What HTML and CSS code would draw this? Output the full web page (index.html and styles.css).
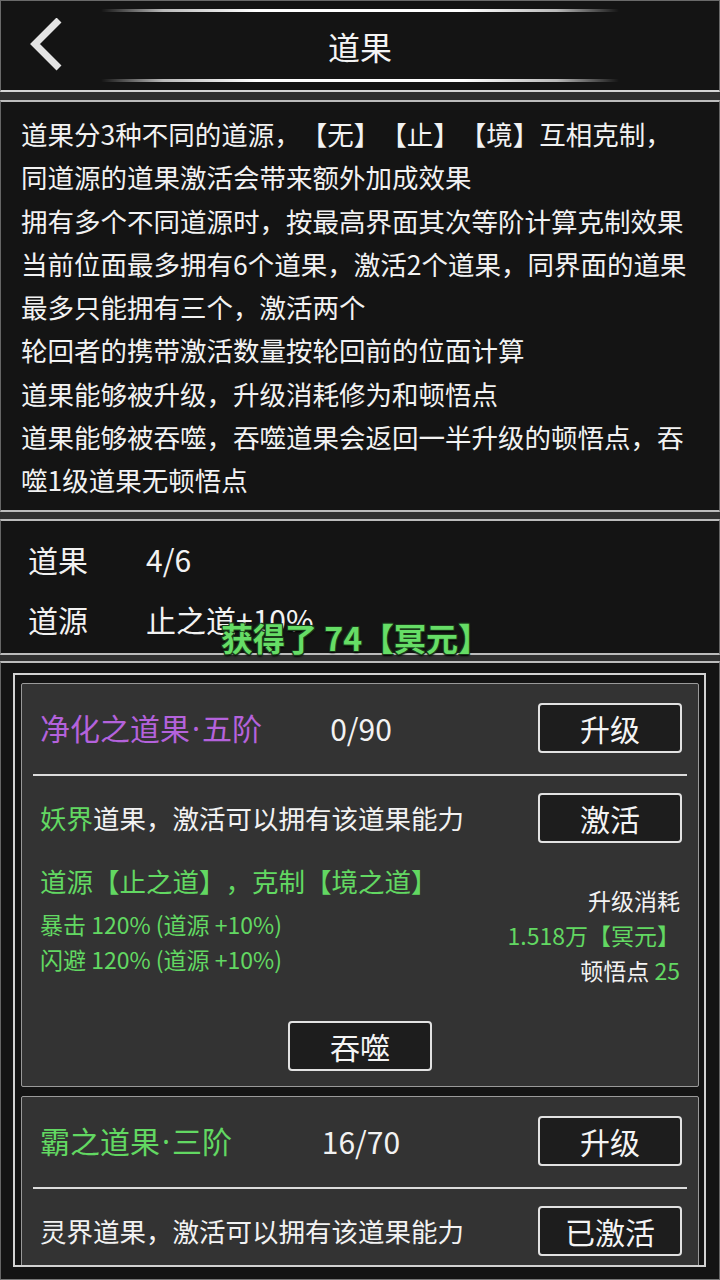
FILE: index.html
```html
<!DOCTYPE html>
<html lang="zh">
<head>
<meta charset="utf-8">
<title>道果</title>
<link rel="stylesheet" href="styles.css">
</head>
<body>
<div class="topbar">
  <div class="deco"></div>
  <div class="bar">
    <div class="back">
      <svg width="40" height="56" viewBox="0 0 40 56"><polyline points="32,2 8,26 32,50" fill="none" stroke="#e4e4e4" stroke-width="7"/></svg>
    </div>
    <div class="title">道果</div>
    <div></div>
  </div>
  <div class="deco"></div>
</div>

<div class="panel desc">
  <div>道果分3种不同的道源，【无】【止】【境】互相克制，</div>
  <div>同道源的道果激活会带来额外加成效果</div>
  <div>拥有多个不同道源时，按最高界面其次等阶计算克制效果</div>
  <div>当前位面最多拥有6个道果，激活2个道果，同界面的道果</div>
  <div>最多只能拥有三个，激活两个</div>
  <div>轮回者的携带激活数量按轮回前的位面计算</div>
  <div>道果能够被升级，升级消耗修为和顿悟点</div>
  <div>道果能够被吞噬，吞噬道果会返回一半升级的顿悟点，吞</div>
  <div>噬1级道果无顿悟点</div>
</div>

<div class="panel stats">
  <div class="srow"><span class="lab">道果</span><span>4/6</span></div>
  <div class="srow"><span class="lab">道源</span><span>止之道+10%</span></div>
</div>

<div class="panel list">
  <div class="frame">
    <div class="card">
      <div class="head">
        <div class="name purple">净化之道果<span class="dot">·</span>五阶</div>
        <div class="count">0/90</div>
        <div class="btn">升级</div>
      </div>
      <div class="sep"></div>
      <div class="act">
        <div class="realm"><span class="green">妖界</span>道果，激活可以拥有该道果能力</div>
        <div class="btn">激活</div>
      </div>
      <div class="info">
        <div class="left">
          <div class="dy green">道源【止之道】，克制【境之道】</div>
          <div class="st green">暴击 120% (道源 +10%)</div>
          <div class="st green">闪避 120% (道源 +10%)</div>
        </div>
        <div class="right">
          <div>升级消耗</div>
          <div class="green">1.518万【冥元】</div>
          <div>顿悟点 <span class="green">25</span></div>
        </div>
      </div>
      <div class="devour"><div class="btn">吞噬</div></div>
    </div>

    <div class="card card2">
      <div class="head">
        <div class="name green">霸之道果<span class="dot">·</span>三阶</div>
        <div class="count">16/70</div>
        <div class="btn">升级</div>
      </div>
      <div class="sep"></div>
      <div class="act">
        <div class="realm">灵界道果，激活可以拥有该道果能力</div>
        <div class="btn">已激活</div>
      </div>
    </div>
  </div>
</div>

<div class="toast">获得了 74【冥元】</div>
</body>
</html>
```

FILE: styles.css
```css
* { box-sizing: border-box; }
html, body {
  margin: 0;
  padding: 0;
}
body {
  width: 720px;
  height: 1280px;
  overflow: hidden;
  background: #303030;
  color: #f2f2f2;
  font-family: "Noto Sans CJK SC", "Noto Sans", sans-serif;
  text-spacing-trim: space-all;
  position: relative;
}

.topbar {
  height: 92px;
  background: #141414;
  border: 1px solid #6a6a6a;
  border-bottom: 2px solid #d6d6d6;
  display: flex;
  flex-direction: column;
  justify-content: space-between;
  padding: 8px 0 8px;
}
.deco {
  height: 3px;
  margin: 0 100px;
  background: linear-gradient(90deg, rgba(255,255,255,0) 0%, rgba(255,255,255,0.7) 12%, #ffffff 30%, #ffffff 70%, rgba(255,255,255,0.7) 88%, rgba(255,255,255,0) 100%);
}
.bar {
  display: grid;
  grid-template-columns: 100px 1fr 100px;
  align-items: center;
}
.back {
  padding-left: 26px;
  height: 56px;
  display: flex;
  align-items: center;
}
.back svg { display: block; }
.title {
  text-align: center;
  font-size: 32px;
  line-height: 40px;
  color: #f4f4f4;
}

.panel {
  background: #141414;
  border-left: 1px solid #666;
  border-right: 1px solid #666;
  border-top: 2px solid #bcbcbc;
  border-bottom: 2px solid #bcbcbc;
}
.desc {
  margin-top: 8px;
  height: 412px;
  padding: 10px 0 0 20px;
  font-size: 26.5px;
  line-height: 43.25px;
  white-space: nowrap;
}
.stats {
  margin-top: 7px;
  height: 136px;
  padding: 8px 0 0 27px;
  font-size: 30px;
  line-height: 60px;
}
.srow {
  display: grid;
  grid-template-columns: 118px 1fr;
}

.list {
  margin-top: 6px;
  height: 619px;
  padding: 10px 13px 0 12px;
  border-bottom: 1px solid #777;
}
.frame {
  height: 594px;
  border: 2px solid #d2d2d2;
  padding: 8px 5px 0 6px;
  overflow: hidden;
}
.card {
  background: #333333;
  border: 1px solid #9a9a9a;
  border-radius: 2px;
}
.card2 {
  margin-top: 9px;
  min-height: 260px;
}
.head {
  display: grid;
  grid-template-columns: 1fr auto 1fr;
  align-items: center;
  padding: 19px 16px 21px 18px;
}
.name {
  font-size: 30px;
  line-height: 40px;
}
.dot {
  font-family: "Noto Sans", "DejaVu Sans", sans-serif;
  padding: 0 2px;
}
.count {
  font-size: 30px;
  line-height: 40px;
  color: #f2f2f2;
}
.head .btn { justify-self: end; }
.btn {
  width: 144px;
  height: 50px;
  border: 2px solid #e2e2e2;
  border-radius: 4px;
  background: #1d1d1d;
  color: #f4f4f4;
  font-size: 30px;
  display: flex;
  align-items: center;
  justify-content: center;
  line-height: 1;
}
.sep {
  height: 2px;
  margin: 0 11px;
  background: #dcdcdc;
}
.act {
  display: flex;
  align-items: center;
  justify-content: space-between;
  padding: 17px 16px 0 18px;
}
.realm {
  font-size: 26.5px;
  line-height: 40px;
}
.info {
  display: flex;
  justify-content: space-between;
  align-items: flex-start;
  margin-top: 20px;
  padding: 0 18px 0 18px;
}
.dy {
  font-size: 26.5px;
  line-height: 36px;
}
.left .st {
  font-size: 23px;
  line-height: 35px;
}
.dy + .st { margin-top: 8px; }
.right {
  margin-top: 20px;
  text-align: right;
  font-size: 23px;
  line-height: 35px;
}
.devour {
  display: flex;
  justify-content: center;
  margin-top: 33px;
  padding-bottom: 15px;
}

.green { color: #62d862; }
.purple { color: #b462dc; }

.toast {
  position: absolute;
  left: 221px;
  top: 615px;
  font-size: 32px;
  line-height: 44px;
  font-weight: bold;
  color: #66dd66;
  white-space: pre;
  text-shadow: -1px -1px 0 #1a3a1a, 1px -1px 0 #1a3a1a, -1px 1px 0 #1a3a1a, 1px 1px 0 #1a3a1a, 0 2px 2px #000;
}
```
